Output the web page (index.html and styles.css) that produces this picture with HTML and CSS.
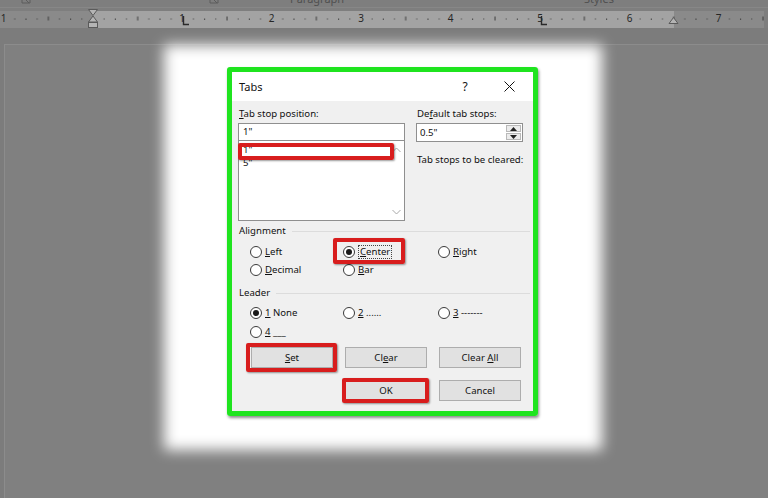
FILE: index.html
```html
<!DOCTYPE html>
<html lang="en">
<head>
<meta charset="utf-8">
<title>Tabs</title>
<link rel="stylesheet" href="styles.css">
</head>
<body>
<svg class="ruler" width="768" height="28" viewBox="0 0 768 28">
  <defs>
    <pattern id="ticks" patternUnits="userSpaceOnUse" x="93" y="0" width="89.33" height="28">
      <rect x="10.6" y="18.5" width="1" height="1" fill="#3a3a3a"/>
      <rect x="21.8" y="18.5" width="1" height="1.4" fill="#3a3a3a"/>
      <rect x="33" y="18.5" width="1" height="1" fill="#3a3a3a"/>
      <rect x="44.2" y="16.5" width="1" height="4" fill="#3a3a3a"/>
      <rect x="55.3" y="18.5" width="1" height="1" fill="#3a3a3a"/>
      <rect x="66.5" y="18.5" width="1" height="1.4" fill="#3a3a3a"/>
      <rect x="77.7" y="18.5" width="1" height="1" fill="#3a3a3a"/>
    </pattern>
  </defs>
  <rect x="0" y="0" width="768" height="28" fill="#7e7e7e"/>
  <!-- ribbon group captions, cut off by the window edge -->
  <text class="cap" x="290" y="3">Paragraph</text>
  <text class="cap" x="584" y="3">Styles</text>
  <path d="M22 -3 H30 V3 H22 Z M25 -1 L29 3" fill="none" stroke="#5c5c5c"/>
  <path d="M210 -3 H218 V3 H210 Z M213 -1 L217 3" fill="none" stroke="#5c5c5c"/>
  <line x1="0" y1="7.5" x2="768" y2="7.5" stroke="#878787"/>
  <!-- ruler band: margins darker, text area lighter -->
  <rect x="0" y="11" width="764" height="17" fill="#8a8a8a"/>
  <rect x="93" y="11" width="581" height="17" fill="#a3a3a3"/>
  <rect x="0" y="11" width="764" height="17" fill="url(#ticks)"/>
  <g class="num">
    <text x="3.5" y="22">1</text>
    <text x="182" y="22">1</text>
    <text x="271.5" y="22">2</text>
    <text x="361" y="22">3</text>
    <text x="450.5" y="22">4</text>
    <text x="540" y="22">5</text>
    <text x="629.5" y="22">6</text>
    <text x="718.5" y="22">7</text>
  </g>
  <!-- left tab stops -->
  <path d="M183.5 16 V24.5 H189" fill="none" stroke="#2a2a2a" stroke-width="1.4"/>
  <path d="M541.5 16 V24.5 H547" fill="none" stroke="#2a2a2a" stroke-width="1.4"/>
  <!-- indent markers -->
  <path d="M88.5 9.5 H97.5 L93 15.5 Z" fill="#b4b4b4" stroke="#5a5a5a"/>
  <path d="M93 16 L88.5 22 H97.5 Z" fill="#b4b4b4" stroke="#5a5a5a"/>
  <rect x="88.5" y="22.5" width="9" height="5" fill="#b4b4b4" stroke="#5a5a5a"/>
  <path d="M673.5 17.5 L669 23.5 H678 Z" fill="#b4b4b4" stroke="#5a5a5a"/>
</svg>

<div class="page">
  <div class="glow"></div>
  <div class="frame">
    <div class="dialog">
      <div class="titlebar">
        <span class="title">Tabs</span>
        <span class="tb-btn">?</span>
        <span class="tb-btn">
          <svg width="11" height="11" viewBox="0 0 11 11"><path d="M0.5 0.5 L10.5 10.5 M10.5 0.5 L0.5 10.5" stroke="#111" stroke-width="1"/></svg>
        </span>
      </div>

      <div class="content">
        <div class="top">
          <div class="col">
            <div class="label"><u>T</u>ab stop position:</div>
            <div class="textbox">1"</div>
            <div class="listbox">
              <div class="items">
                <div class="item">1"</div>
                <div class="item">5"</div>
              </div>
              <div class="scroll">
                <svg width="9" height="6" viewBox="0 0 9 6"><path d="M0.5 5 L4.5 1 L8.5 5" fill="none" stroke="#a8a8a8"/></svg>
                <svg width="9" height="6" viewBox="0 0 9 6"><path d="M0.5 1 L4.5 5 L8.5 1" fill="none" stroke="#a8a8a8"/></svg>
              </div>
              <span class="mark mark-item"></span>
            </div>
          </div>
          <div class="col">
            <div class="label">De<u>f</u>ault tab stops:</div>
            <div class="spin">
              <span class="spin-val">0.5"</span>
              <span class="spin-btns">
                <span class="spin-btn"><svg width="7" height="4" viewBox="0 0 7 4"><path d="M0 4 L3.5 0 L7 4 Z" fill="#222"/></svg></span>
                <span class="spin-btn"><svg width="7" height="4" viewBox="0 0 7 4"><path d="M0 0 L3.5 4 L7 0 Z" fill="#222"/></svg></span>
              </span>
            </div>
            <div class="label cleared">Tab stops to be cleared:</div>
          </div>
        </div>

        <div class="group-head"><span>Alignment</span><i></i></div>
        <div class="radios align">
          <div class="radio"><span class="dot"></span><span><u>L</u>eft</span></div>
          <div class="radio marked">
            <span class="dot on"></span><span class="focus"><u>C</u>enter</span>
            <span class="mark mark-center"></span>
          </div>
          <div class="radio"><span class="dot"></span><span><u>R</u>ight</span></div>
          <div class="radio"><span class="dot"></span><span><u>D</u>ecimal</span></div>
          <div class="radio"><span class="dot"></span><span><u>B</u>ar</span></div>
        </div>

        <div class="group-head leader-head"><span>Leader</span><i></i></div>
        <div class="radios leader">
          <div class="radio"><span class="dot on"></span><span><u>1</u> None</span></div>
          <div class="radio"><span class="dot"></span><span><u>2</u> ......</span></div>
          <div class="radio"><span class="dot"></span><span><u>3</u> -------</span></div>
          <div class="radio"><span class="dot"></span><span><u>4</u> ___</span></div>
        </div>

        <div class="buttons">
          <button class="btn marked"><u>S</u>et<span class="mark mark-set"></span></button>
          <button class="btn">Cl<u>e</u>ar</button>
          <button class="btn">Clear <u>A</u>ll</button>
        </div>
        <div class="buttons second">
          <button class="btn ok marked">OK<span class="mark mark-ok"></span></button>
          <button class="btn">Cancel</button>
        </div>
      </div>
    </div>
  </div>
</div>
</body>
</html>
```

FILE: styles.css
```css
* {
  box-sizing: border-box;
  margin: 0;
  padding: 0;
}

html,
body {
  width: 768px;
  height: 498px;
  overflow: hidden;
}

body {
  background: #7c7c7c;
  font-family: "Noto Sans", "DejaVu Sans", sans-serif;
  color: #000;
}

/* ---------- ruler strip ---------- */
.ruler {
  display: block;
}

.ruler .cap {
  font-family: "Noto Sans", sans-serif;
  font-size: 11px;
  fill: #505050;
}

.ruler .num text {
  font-family: "Noto Sans", sans-serif;
  font-size: 10px;
  fill: #262626;
  text-anchor: middle;
}

/* ---------- document page ---------- */
.page {
  margin: 16px 0 0 4px;
  height: 454px;
  border-top: 1px solid #8c8c8c;
  border-left: 1px solid #8c8c8c;
  background: #808080;
  display: grid;
  grid-template-columns: 1fr;
  grid-template-rows: 1fr;
}

.glow {
  grid-area: 1 / 1;
  align-self: start;
  justify-self: start;
  margin: 0 0 0 159px;
  width: 438px;
  height: 405px;
  background: #fff;
  filter: blur(7px);
}

.frame {
  grid-area: 1 / 1;
  z-index: 1;
  align-self: start;
  justify-self: start;
  margin: 22px 0 0 222px;
  width: 311px;
  height: 349px;
  border: 5px solid #1fe41f;
  border-radius: 3px;
  box-shadow: 1px 2px 3px rgba(0, 0, 0, 0.45);
}

/* ---------- dialog ---------- */
.dialog {
  height: 100%;
  background: #f0f0f0;
  font-size: 9.6px;
  line-height: 14px;
  color: #111;
  white-space: nowrap;
}

.titlebar {
  height: 29px;
  background: #fff;
  display: flex;
  align-items: center;
  padding: 0 9px 0 7px;
}

.title {
  flex: 1;
  font-size: 11px;
}

.tb-btn {
  width: 30px;
  height: 29px;
  display: flex;
  align-items: center;
  justify-content: center;
  font-size: 12px;
}

.tb-btn + .tb-btn {
  margin-left: 14px;
}

.content {
  padding: 6px 10px 0 6px;
}

.top {
  display: grid;
  grid-template-columns: 167px 107px;
  column-gap: 11px;
}

.label {
  padding-left: 1px;
  height: 14px;
  margin-bottom: 2px;
}

.textbox {
  height: 18px;
  border: 1px solid #8f8f8f;
  background: #fff;
  padding-left: 4px;
  line-height: 16px;
}

.listbox {
  position: relative;
  height: 80px;
  border: 1px solid #8f8f8f;
  border-top: 0;
  background: #fff;
  display: flex;
}

.items {
  flex: 1;
  padding: 2px 0 0 4px;
}

.item {
  line-height: 13px;
}

.scroll {
  width: 16px;
  display: flex;
  flex-direction: column;
  align-items: center;
  justify-content: space-between;
  padding: 6px 0 5px;
}

.scroll svg {
  display: block;
}

.spin {
  height: 19px;
  border: 1px solid #8f8f8f;
  background: #fff;
  display: flex;
  align-items: center;
  padding: 0 1px 0 3px;
}

.spin-val {
  flex: 1;
}

.spin-btns {
  width: 15px;
  height: 15px;
  display: flex;
  flex-direction: column;
  gap: 1px;
}

.spin-btn {
  flex: 1;
  background: #ececec;
  border: 1px solid #b9b9b9;
  display: flex;
  align-items: center;
  justify-content: center;
}

.spin-btn svg {
  display: block;
}

.cleared {
  margin-top: 11px;
}

/* ---------- option groups ---------- */
.group-head {
  margin-top: 3px;
  height: 14px;
  padding-left: 1px;
  display: flex;
  align-items: center;
  margin-right: -7px;
}

.group-head i {
  flex: 1;
  height: 1px;
  background: #dcdcdc;
  margin-left: 6px;
}

.leader-head {
  margin-top: 7px;
}

.radios {
  display: grid;
  grid-template-columns: 93px 95px 1fr;
  padding-left: 12px;
  margin-top: 5px;
}

.radios.leader {
  margin-top: 3px;
}

.radio {
  height: 18px;
  display: flex;
  align-items: center;
  gap: 3px;
}

.leader .radio {
  height: 19px;
}

.dot {
  width: 12px;
  height: 12px;
  border-radius: 50%;
  border: 1px solid #3a3a3a;
  background: #fff;
  display: flex;
  align-items: center;
  justify-content: center;
}

.dot.on::after {
  content: "";
  width: 6px;
  height: 6px;
  border-radius: 50%;
  background: #1a1a1a;
}

.focus {
  border: 1px dotted #444;
  padding: 0 1px;
  line-height: 12px;
}

/* ---------- buttons ---------- */
.buttons {
  display: grid;
  grid-template-columns: repeat(3, 82px);
  column-gap: 12px;
  padding-left: 13px;
  margin-top: 6px;
}

.buttons.second {
  margin-top: 12px;
}

.btn {
  height: 21px;
  background: #e1e1e1;
  border: 1px solid #adadad;
  font-family: inherit;
  font-size: 9.6px;
  color: #111;
}

.btn.ok {
  grid-column: 2;
}

/* ---------- red call-out boxes drawn over controls ---------- */
.marked {
  position: relative;
}

.mark {
  position: absolute;
  border: 4px solid #d81d1d;
  border-radius: 2px;
  box-shadow: 1px 1px 2px rgba(0, 0, 0, 0.4);
  pointer-events: none;
}

.mark-item {
  left: -1px;
  top: 2px;
  width: 156px;
  height: 17px;
}

.mark-center {
  left: -10px;
  top: -5px;
  width: 72px;
  height: 26px;
}

.mark-set {
  inset: -5px -5px -5px -6px;
}

.mark-ok {
  inset: -3px -3px -3px -4px;
}
```
